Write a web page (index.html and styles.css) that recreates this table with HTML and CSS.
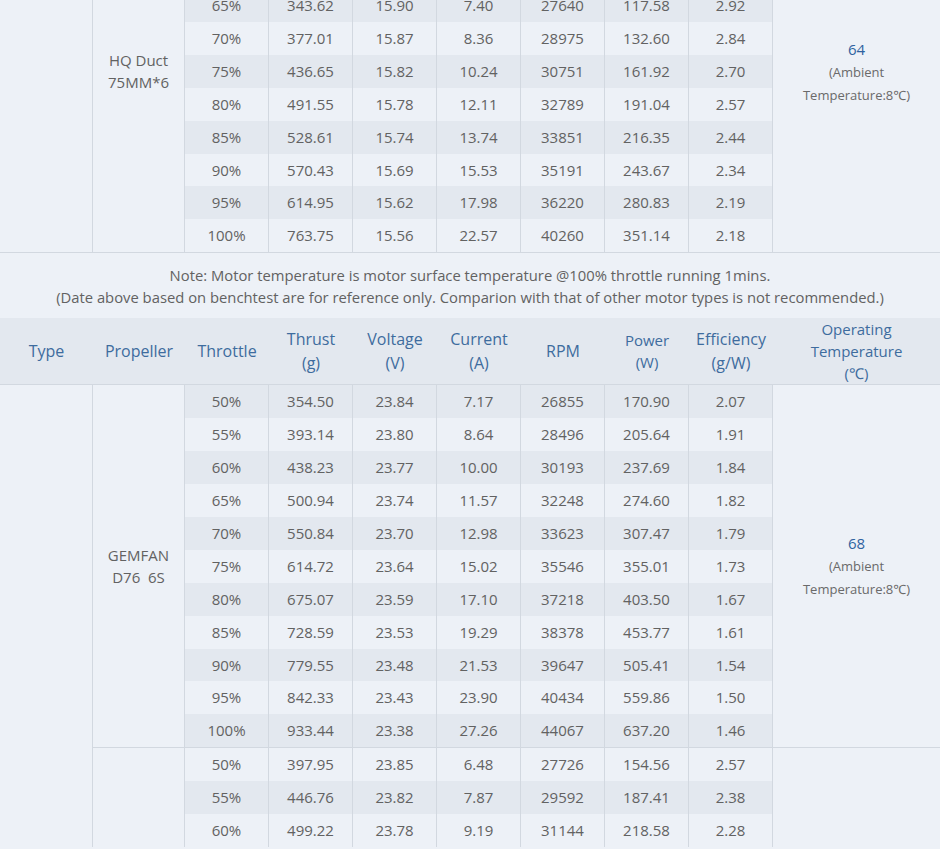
FILE: index.html
```html
<!DOCTYPE html>
<html lang="en">
<head>
<meta charset="utf-8">
<title>Motor test data</title>
<link rel="stylesheet" href="styles.css">
</head>
<body>
<table class="spec">
  <colgroup>
    <col class="c-type"><col class="c-prop"><col class="c-n"><col class="c-n"><col class="c-n"><col class="c-n"><col class="c-n"><col class="c-n"><col class="c-n"><col class="c-temp">
  </colgroup>
  <tbody>
    <tr class="dk">
      <td class="grp end" rowspan="8"></td>
      <td class="grp end prop-top" rowspan="8">HQ Duct<br>75MM*6</td>
      <td>65%</td><td>343.62</td><td>15.90</td><td>7.40</td><td>27640</td><td>117.58</td><td>2.92</td>
      <td class="grp end temp temp-top" rowspan="8"><span class="t-val">64</span><br><span class="t-note">(Ambient<br>Temperature:8℃)</span></td>
    </tr>
    <tr><td>70%</td><td>377.01</td><td>15.87</td><td>8.36</td><td>28975</td><td>132.60</td><td>2.84</td></tr>
    <tr class="dk"><td>75%</td><td>436.65</td><td>15.82</td><td>10.24</td><td>30751</td><td>161.92</td><td>2.70</td></tr>
    <tr><td>80%</td><td>491.55</td><td>15.78</td><td>12.11</td><td>32789</td><td>191.04</td><td>2.57</td></tr>
    <tr class="dk"><td>85%</td><td>528.61</td><td>15.74</td><td>13.74</td><td>33851</td><td>216.35</td><td>2.44</td></tr>
    <tr><td>90%</td><td>570.43</td><td>15.69</td><td>15.53</td><td>35191</td><td>243.67</td><td>2.34</td></tr>
    <tr class="dk"><td>95%</td><td>614.95</td><td>15.62</td><td>17.98</td><td>36220</td><td>280.83</td><td>2.19</td></tr>
    <tr class="last"><td>100%</td><td>763.75</td><td>15.56</td><td>22.57</td><td>40260</td><td>351.14</td><td>2.18</td></tr>

    <tr class="note-row">
      <td colspan="10" class="note">Note: Motor temperature is motor surface temperature @100% throttle running 1mins.<br>(Date above based on benchtest are for reference only. Comparion with that of other motor types is not recommended.)</td>
    </tr>

    <tr class="head">
      <th>Type</th>
      <th>Propeller</th>
      <th>Throttle</th>
      <th>Thrust<br>(g)</th>
      <th>Voltage<br>(V)</th>
      <th>Current<br>(A)</th>
      <th>RPM</th>
      <th class="small">Power<br>(W)</th>
      <th>Efficiency<br>(g/W)</th>
      <th class="small">Operating<br>Temperature<br>(℃)</th>
    </tr>

    <tr class="dk">
      <td class="grp" rowspan="14"></td>
      <td class="grp end" rowspan="11">GEMFAN<br>D76&nbsp;&nbsp;6S</td>
      <td>50%</td><td>354.50</td><td>23.84</td><td>7.17</td><td>26855</td><td>170.90</td><td>2.07</td>
      <td class="grp end temp" rowspan="11"><span class="t-val">68</span><br><span class="t-note">(Ambient<br>Temperature:8℃)</span></td>
    </tr>
    <tr><td>55%</td><td>393.14</td><td>23.80</td><td>8.64</td><td>28496</td><td>205.64</td><td>1.91</td></tr>
    <tr class="dk"><td>60%</td><td>438.23</td><td>23.77</td><td>10.00</td><td>30193</td><td>237.69</td><td>1.84</td></tr>
    <tr><td>65%</td><td>500.94</td><td>23.74</td><td>11.57</td><td>32248</td><td>274.60</td><td>1.82</td></tr>
    <tr class="dk"><td>70%</td><td>550.84</td><td>23.70</td><td>12.98</td><td>33623</td><td>307.47</td><td>1.79</td></tr>
    <tr><td>75%</td><td>614.72</td><td>23.64</td><td>15.02</td><td>35546</td><td>355.01</td><td>1.73</td></tr>
    <tr class="dk"><td>80%</td><td>675.07</td><td>23.59</td><td>17.10</td><td>37218</td><td>403.50</td><td>1.67</td></tr>
    <tr><td>85%</td><td>728.59</td><td>23.53</td><td>19.29</td><td>38378</td><td>453.77</td><td>1.61</td></tr>
    <tr class="dk"><td>90%</td><td>779.55</td><td>23.48</td><td>21.53</td><td>39647</td><td>505.41</td><td>1.54</td></tr>
    <tr><td>95%</td><td>842.33</td><td>23.43</td><td>23.90</td><td>40434</td><td>559.86</td><td>1.50</td></tr>
    <tr class="dk last"><td>100%</td><td>933.44</td><td>23.38</td><td>27.26</td><td>44067</td><td>637.20</td><td>1.46</td></tr>

    <tr>
      <td class="grp" rowspan="3"></td>
      <td>50%</td><td>397.95</td><td>23.85</td><td>6.48</td><td>27726</td><td>154.56</td><td>2.57</td>
      <td class="grp temp" rowspan="3"></td>
    </tr>
    <tr class="dk"><td>55%</td><td>446.76</td><td>23.82</td><td>7.87</td><td>29592</td><td>187.41</td><td>2.38</td></tr>
    <tr><td>60%</td><td>499.22</td><td>23.78</td><td>9.19</td><td>31144</td><td>218.58</td><td>2.28</td></tr>
  </tbody>
</table>
</body>
</html>
```

FILE: styles.css
```css
html, body {
  margin: 0;
  padding: 0;
  background: #edf1f7;
  overflow: hidden;
}

.spec {
  width: 940px;
  margin-top: -11px;
  table-layout: fixed;
  border-collapse: separate;
  border-spacing: 0;
  font-family: "Open Sans", "Noto Sans", "DejaVu Sans", sans-serif;
  color: #626262;
  font-size: 15px;
}

.c-type { width: 93px; }
.c-prop { width: 92px; }
.c-n { width: 84px; }
.c-temp { width: 167px; }

.spec td {
  padding: 0;
  text-align: center;
  vertical-align: middle;
  line-height: 32.9px;
  background: #edf1f7;
  border-right: 1px solid #d2d8e0;
}

.spec tr.dk > td {
  background: #e3e8ef;
}

.spec tr.last > td {
  border-bottom: 1px solid #d2d8e0;
}

.spec tr > td.grp {
  background: #edf1f7;
  line-height: 22px;
}

.spec td.grp.end {
  border-bottom: 1px solid #d2d8e0;
}

.spec td.temp {
  border-right: 0;
}

.spec tr > td.prop-top {
  vertical-align: top;
  padding-top: 60px;
}

.spec tr > td.temp-top {
  vertical-align: top;
  padding-top: 49px;
}

.t-val {
  color: #2f62a0;
  font-size: 15px;
}

.t-note {
  font-size: 13px;
  color: #6a6a6a;
}

.spec td.note {
  border: 0;
  background: #edf1f7;
  font-size: 14.8px;
  line-height: 22px;
  padding: 11px 0 10px;
}

.head th {
  background: #e3e8ef;
  color: #3e6c9e;
  font-weight: normal;
  font-size: 16px;
  line-height: 24px;
  height: 66px;
  padding: 0;
  text-align: center;
  vertical-align: middle;
  border-bottom: 1px solid #d2d8e0;
}

.head th.small {
  font-size: 15px;
  line-height: 22px;
}
```
